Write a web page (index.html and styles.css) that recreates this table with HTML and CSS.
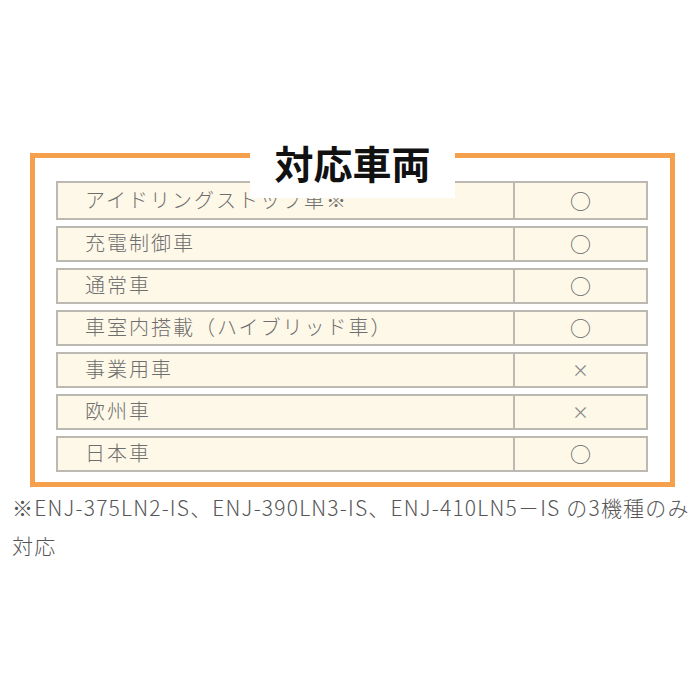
FILE: index.html
```html
<!DOCTYPE html>
<html lang="ja">
<head>
<meta charset="utf-8">
<link rel="stylesheet" href="styles.css">
</head>
<body>
<div class="page">
  <section class="frame">
    <h2 class="title">対応車両</h2>
    <div class="rows">
      <div class="row first"><div class="name">アイドリングストップ車※</div><div class="mark">○</div></div>
      <div class="row"><div class="name">充電制御車</div><div class="mark">○</div></div>
      <div class="row"><div class="name">通常車</div><div class="mark">○</div></div>
      <div class="row"><div class="name">車室内搭載（ハイブリッド車）</div><div class="mark">○</div></div>
      <div class="row"><div class="name">事業用車</div><div class="mark cross">×</div></div>
      <div class="row"><div class="name">欧州車</div><div class="mark cross">×</div></div>
      <div class="row"><div class="name">日本車</div><div class="mark">○</div></div>
    </div>
  </section>
  <p class="note">※ENJ-375LN2-IS、ENJ-390LN3-IS、ENJ-410LN5－IS の3機種のみ<br>対応</p>
</div>
</body>
</html>
```

FILE: styles.css
```css
* { box-sizing: border-box; }
html, body { margin: 0; padding: 0; background: #fff; }
body { font-family: "Noto Sans CJK JP", "Noto Sans", sans-serif; }
.page { padding-top: 153px; }
.frame {
  position: relative;
  margin-left: 30px;
  width: 645px;
  border: 5px solid #f4a04d;
  padding: 23px 22px 10px 21px;
}
.title {
  position: absolute;
  left: 215px;
  top: -20px;
  width: 205px;
  height: 60px;
  margin: 0;
  background: #fff;
  color: #111;
  font-size: 39px;
  font-weight: 700;
  line-height: 48px;
  text-align: center;
  letter-spacing: 0;
}
.rows { display: flex; flex-direction: column; gap: 6px; }
.row {
  display: flex;
  height: 36px;
  background: #fef8e8;
  border: 2px solid #bcb9b3;
}
.row.first { height: 39px; }
.name {
  flex: 0 0 457px;
  border-right: 2px solid #bcb9b3;
  padding-left: 27px;
  color: #6e6e6e;
  font-size: 20px;
  font-weight: 300;
  letter-spacing: 2px;
  display: flex;
  align-items: center;
  padding-bottom: 3px;
  white-space: nowrap;
}
.mark {
  flex: 1;
  display: flex;
  align-items: center;
  justify-content: center;
  color: #666;
  font-size: 21px;
  padding-bottom: 2px;
}
.mark.cross { font-size: 17px; color: #888; }
.note {
  margin: 1px 0 0;
  padding-left: 12px;
  color: #555;
  font-size: 21px;
  font-weight: 300;
  letter-spacing: 1.2px;
  line-height: 38px;
  white-space: nowrap;
}
```
